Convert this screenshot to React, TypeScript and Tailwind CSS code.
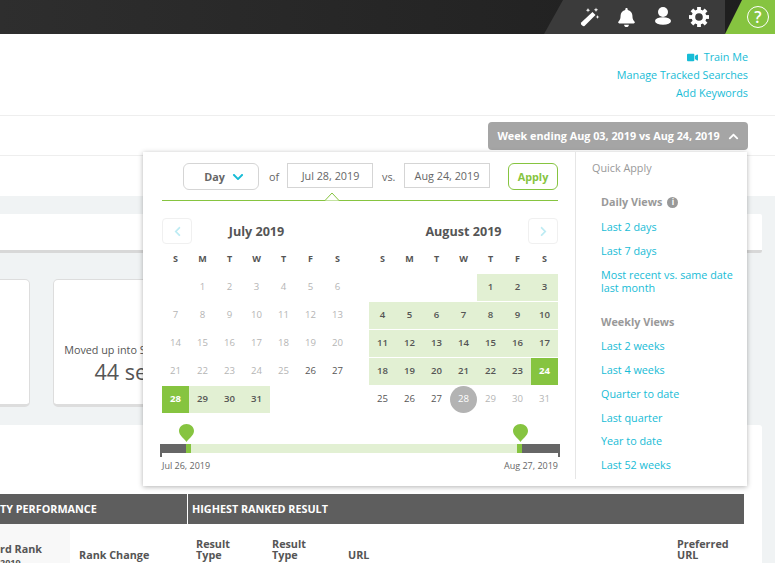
import React from 'react';
import { FaVideo, FaChevronDown, FaChevronUp, FaChevronLeft, FaChevronRight, FaBell } from 'react-icons/fa';

type DayState = 'muted' | 'plain' | 'range' | 'selected' | 'circle';

interface MonthProps {
  title: string;
  offset: number;
  stateOf: (day: number) => DayState;
  arrow: 'left' | 'right';
}

const weekDays = ['S', 'M', 'T', 'W', 'T', 'F', 'S'];

const dayClass: Record<DayState, string> = {
  muted: 'text-[#b5b5b5]',
  plain: 'text-[#555555]',
  range: 'bg-[#e2f0d3] text-[#555555] font-semibold',
  selected: 'bg-[#86c440] text-white font-bold',
  circle: 'text-white',
};

const Month: React.FC<MonthProps> = ({ title, offset, stateOf, arrow }) => {
  const days = Array.from({ length: 31 }, (_, i) => i + 1);
  return (
    <div className="w-[189px]">
      <div className="relative flex h-[26px] items-center justify-center">
        <span className="pt-[2px] text-[12.6px] font-bold text-[#555555]">{title}</span>
        <button
          className={`absolute top-0 flex h-[26px] w-[30px] items-center justify-center rounded-[4px] border border-[#f0f0f0] text-[#bdebf3] ${
            arrow === 'left' ? 'left-0' : 'right-0'
          }`}
        >
          {arrow === 'left' ? <FaChevronLeft size={11} /> : <FaChevronRight size={11} />}
        </button>
      </div>
      <div className="mt-[6px] grid grid-cols-7 text-center">
        {weekDays.map((d, i) => (
          <span key={i} className="h-[24px] text-[9px] leading-[18px] font-bold text-[#555555]">
            {d}
          </span>
        ))}
      </div>
      <div className="grid grid-cols-7 gap-y-px text-center text-[9.6px]">
        {Array.from({ length: offset }, (_, i) => (
          <span key={`blank-${i}`} className="h-[27px]" />
        ))}
        {days.map((d) => {
          const state = stateOf(d);
          return (
            <span key={d} className={`relative flex h-[27px] items-center justify-center ${dayClass[state]}`}>
              {state === 'circle' && (
                <span className="absolute left-0 top-0 h-[27px] w-[27px] rounded-full bg-[#b3b3b3]" />
              )}
              <span className="relative">{d}</span>
            </span>
          );
        })}
      </div>
    </div>
  );
};

const julyState = (d: number): DayState => {
  if (d <= 25) return 'muted';
  if (d <= 27) return 'plain';
  if (d === 28) return 'selected';
  return 'range';
};

const augustState = (d: number): DayState => {
  if (d <= 23) return 'range';
  if (d === 24) return 'selected';
  if (d <= 27) return 'plain';
  if (d === 28) return 'circle';
  return 'muted';
};

const Pin = ({ className }: { className: string }) => (
  <svg className={`absolute top-0 ${className}`} width="15" height="18" viewBox="0 0 15 18">
    <path d="M7.5 18 C5.5 14.5 0 11.5 0 7 C0 3 3.3 0 7.5 0 C11.7 0 15 3 15 7 C15 11.5 9.5 14.5 7.5 18 Z" fill="#86c440" />
  </svg>
);

const DateRangePopup = () => (
  <div className="absolute left-[143px] top-[152px] z-10 flex h-[334px] w-[604px] bg-white shadow-[0_1px_5px_rgba(0,0,0,0.3)]">
    <div className="flex h-[327px] w-[433px] flex-col border-r border-[#e6e6e6] pl-[19px] pr-[17px]">
      <div className="relative flex h-[49px] items-start border-b border-[#86c440] pt-[11px] text-[10.8px] text-[#666666]">
        <div className="ml-[21px] flex h-[27px] w-[76px] items-center justify-center gap-[7px] rounded-[6px] border border-[#d5d5d5] pl-[6px] pt-[1px] font-bold">
          Day
          <FaChevronDown size={12} className="text-[#17bcd6]" />
        </div>
        <span className="ml-[10px] mt-[6px] w-[18px]">of</span>
        <div className="flex h-[25px] w-[86px] items-center justify-center border border-[#d5d5d5] pl-[1px] pt-[1px]">Jul 28, 2019</div>
        <span className="ml-[9px] mt-[6px] w-[22px]">vs.</span>
        <div className="flex h-[25px] w-[86px] items-center justify-center border border-[#d5d5d5] pt-[1px]">Aug 24, 2019</div>
        <div className="ml-[18px] flex h-[27px] w-[50px] items-center justify-center rounded-[6px] border border-[#86c440] pt-[1px] font-bold text-[#86c440]">
          Apply
        </div>
        <svg className="absolute bottom-[-1px] left-[161px]" width="18" height="9" viewBox="0 0 18 9">
          <path d="M0 8.5 H2 L9 1 L16 8.5 H18" fill="white" stroke="#86c440" />
        </svg>
      </div>
      <div className="mt-[17px] flex justify-between">
        <Month title="July 2019" offset={1} stateOf={julyState} arrow="left" />
        <Month title="August 2019" offset={4} stateOf={augustState} arrow="right" />
      </div>
      <div className="relative mt-[11px] h-[33px]">
        <Pin className="left-[17px]" />
        <Pin className="left-[351px]" />
        <div className="absolute left-[-2px] right-[-2px] top-[20px] flex h-[9px]">
          <div className="w-[26px] bg-[#666666]" />
          <div className="w-[5px] bg-[#86c440]" />
          <div className="flex-1 bg-[#e2f0d3]" />
          <div className="w-[5px] bg-[#86c440]" />
          <div className="w-[38px] bg-[#666666]" />
        </div>
        <div className="absolute left-[-2px] top-[29px] h-[4px] w-[2px] bg-[#666666]" />
        <div className="absolute right-[-2px] top-[29px] h-[4px] w-[2px] bg-[#666666]" />
      </div>
      <div className="mt-[2px] flex justify-between text-[9px] text-[#666666]">
        <span>Jul 26, 2019</span>
        <span>Aug 27, 2019</span>
      </div>
    </div>
    <div className="flex-1 pl-[16px] pt-[8px] text-[10.8px] text-[#17bcd6]">
      <div className="text-[#999999]">Quick Apply</div>
      <div className="pl-[9px]">
        <div className="mt-[18px] flex items-center gap-[5px] font-bold text-[#999999]">
          Daily Views
          <span className="flex h-[11px] w-[11px] items-center justify-center rounded-full bg-[#999999] text-[8px] text-white">i</span>
        </div>
        <div className="mt-[9px] leading-[16px]">Last 2 days</div>
        <div className="mt-[8px] leading-[16px]">Last 7 days</div>
        <div className="mt-[9px] w-[140px] leading-[13px]">Most recent vs. same date last month</div>
        <div className="mt-[20px] font-bold text-[#999999]">Weekly Views</div>
        <div className="mt-[7px] leading-[16px]">Last 2 weeks</div>
        <div className="mt-[8px] leading-[16px]">Last 4 weeks</div>
        <div className="mt-[8px] leading-[16px]">Quarter to date</div>
        <div className="mt-[8px] leading-[16px]">Last quarter</div>
        <div className="mt-[7px] leading-[16px]">Year to date</div>
        <div className="mt-[8px] leading-[16px]">Last 52 weeks</div>
      </div>
    </div>
  </div>
);

const GearIcon = () => (
  <svg width="20" height="20" viewBox="-10 -10 20 20" className="ml-[18px] shrink-0">
    <circle r="5.6" fill="none" stroke="white" strokeWidth="3.6" />
    {[0, 45, 90, 135, 180, 225, 270, 315].map((angle) => (
      <rect key={angle} x="-1.9" y="-10" width="3.8" height="3.5" fill="white" transform={`rotate(${angle})`} />
    ))}
  </svg>
);

const TopBar = () => (
  <header className="flex h-[34px] justify-end bg-gradient-to-r from-[#2e2e2e] to-[#1e1e1e]">
    <div className="flex w-[181px] items-center [clip-path:polygon(19px_0,100%_0,100%_100%,0_100%)] bg-[#3b3b3b] pl-[36px] text-white">
      <svg width="20" height="20" viewBox="0 0 20 20" className="shrink-0">
        <path d="M12.5 5 L15.5 8 L4.5 19 Q3.5 19.6 2.5 18.8 L1.2 17.5 Q0.6 16.5 1.2 15.6 Z" fill="white" />
        <path d="M8 1 L8.6 2.6 L10.2 3.2 L8.6 3.8 L8 5.4 L7.4 3.8 L5.8 3.2 L7.4 2.6 Z" fill="white" />
        <path d="M16 .5 L16.6 2.2 L18.3 2.8 L16.6 3.4 L16 5.1 L15.4 3.4 L13.7 2.8 L15.4 2.2 Z" fill="white" />
        <path d="M17.5 8 L18 9.5 L19.5 10 L18 10.5 L17.5 12 L17 10.5 L15.5 10 L17 9.5 Z" fill="white" />
      </svg>
      <FaBell size={19} className="ml-[17px] shrink-0" />
      <svg width="16" height="18" viewBox="0 0 16 18" className="mb-[2px] ml-[19px] shrink-0">
        <circle cx="8" cy="5" r="5" fill="white" />
        <ellipse cx="8" cy="14" rx="8" ry="3.8" fill="white" />
      </svg>
      <GearIcon />
    </div>
    <div className="flex w-[50px] items-center justify-end [clip-path:polygon(17px_0,100%_0,100%_100%,0_100%)] bg-[#86c440] pr-[6px]">
      <div className="flex h-[22px] w-[22px] items-center justify-center rounded-full border-[1.5px] border-white text-[16px] font-semibold text-white">
        ?
      </div>
    </div>
  </header>
);

export default function App() {
  return (
    <div className="relative flex h-[563px] w-[775px] flex-col overflow-hidden bg-white font-['Open_Sans',sans-serif]">
      <TopBar />

      <div className="flex h-[82px] flex-col items-end border-b border-[#eeeeee] pr-[27px] pt-[14px] text-[10.8px] leading-[18px] text-[#17bcd6]">
        <div className="flex items-center gap-[6px]">
          <FaVideo size={11} />
          Train Me
        </div>
        <div>Manage Tracked Searches</div>
        <div>Add Keywords</div>
      </div>

      <div className="flex h-[40px] justify-end border-b border-[#eeeeee] pr-[27px] pt-[6px]">
        <div className="flex h-[28px] w-[260px] items-center justify-center gap-[8px] rounded-[4px] bg-[#a5a5a5] text-[10.8px] font-bold text-white">
          Week ending Aug 03, 2019 vs Aug 24, 2019
          <FaChevronUp size={11} />
        </div>
      </div>

      <div className="h-[40px] bg-white" />

      <main className="flex flex-1 flex-col bg-[#f0f3f4] pr-[13px]">
        <div className="mt-[18px] h-[39px] rounded-r-[2px] border-b-[3px] border-[#d8d8d8] bg-white" />

        <div className="mt-[26px] flex gap-[23px]">
          <div className="ml-[-169px] h-[128px] w-[199px] rounded-[5px] border border-b-[3px] border-[#dddddd] bg-white" />
          <div className="flex h-[128px] w-[200px] flex-col items-center justify-center whitespace-nowrap rounded-[5px] border border-b-[3px] border-[#dddddd] bg-white pl-[2px] pt-[44px] text-[#555555]">
            <div className="text-[10.8px]">Moved up into Search Top 3 Results</div>
            <div className="text-[21.5px] leading-[28px]">44 searches</div>
          </div>
        </div>

        <div className="mt-[18px] flex-1 rounded-tr-[3px] bg-white">
          <div className="mt-[69px] flex h-[30px] w-[744px] items-center bg-[#5e5e5e] text-[10.8px] font-bold text-white">
            <div className="w-[188px] border-r border-white leading-[30px]">TY PERFORMANCE</div>
            <div className="pl-[4px]">HIGHEST RANKED RESULT</div>
          </div>
          <div className="flex h-[39px] text-[10.8px] font-bold leading-[11px] text-[#555555]">
            <div className="w-[70px] bg-[#f8f8f8] pt-[19px]">
              rd Rank
              <div className="mt-[3px] text-[9px]">2019</div>
            </div>
            <div className="w-[126px] pl-[9px] pt-[25px]">Rank Change</div>
            <div className="w-[76px] pt-[14px]">
              Result
              <br />
              Type
            </div>
            <div className="w-[76px] pt-[14px]">
              Result
              <br />
              Type
            </div>
            <div className="w-[329px] pt-[25px]">URL</div>
            <div className="pt-[14px]">
              Preferred
              <br />
              URL
            </div>
          </div>
        </div>
      </main>

      <DateRangePopup />
    </div>
  );
}
